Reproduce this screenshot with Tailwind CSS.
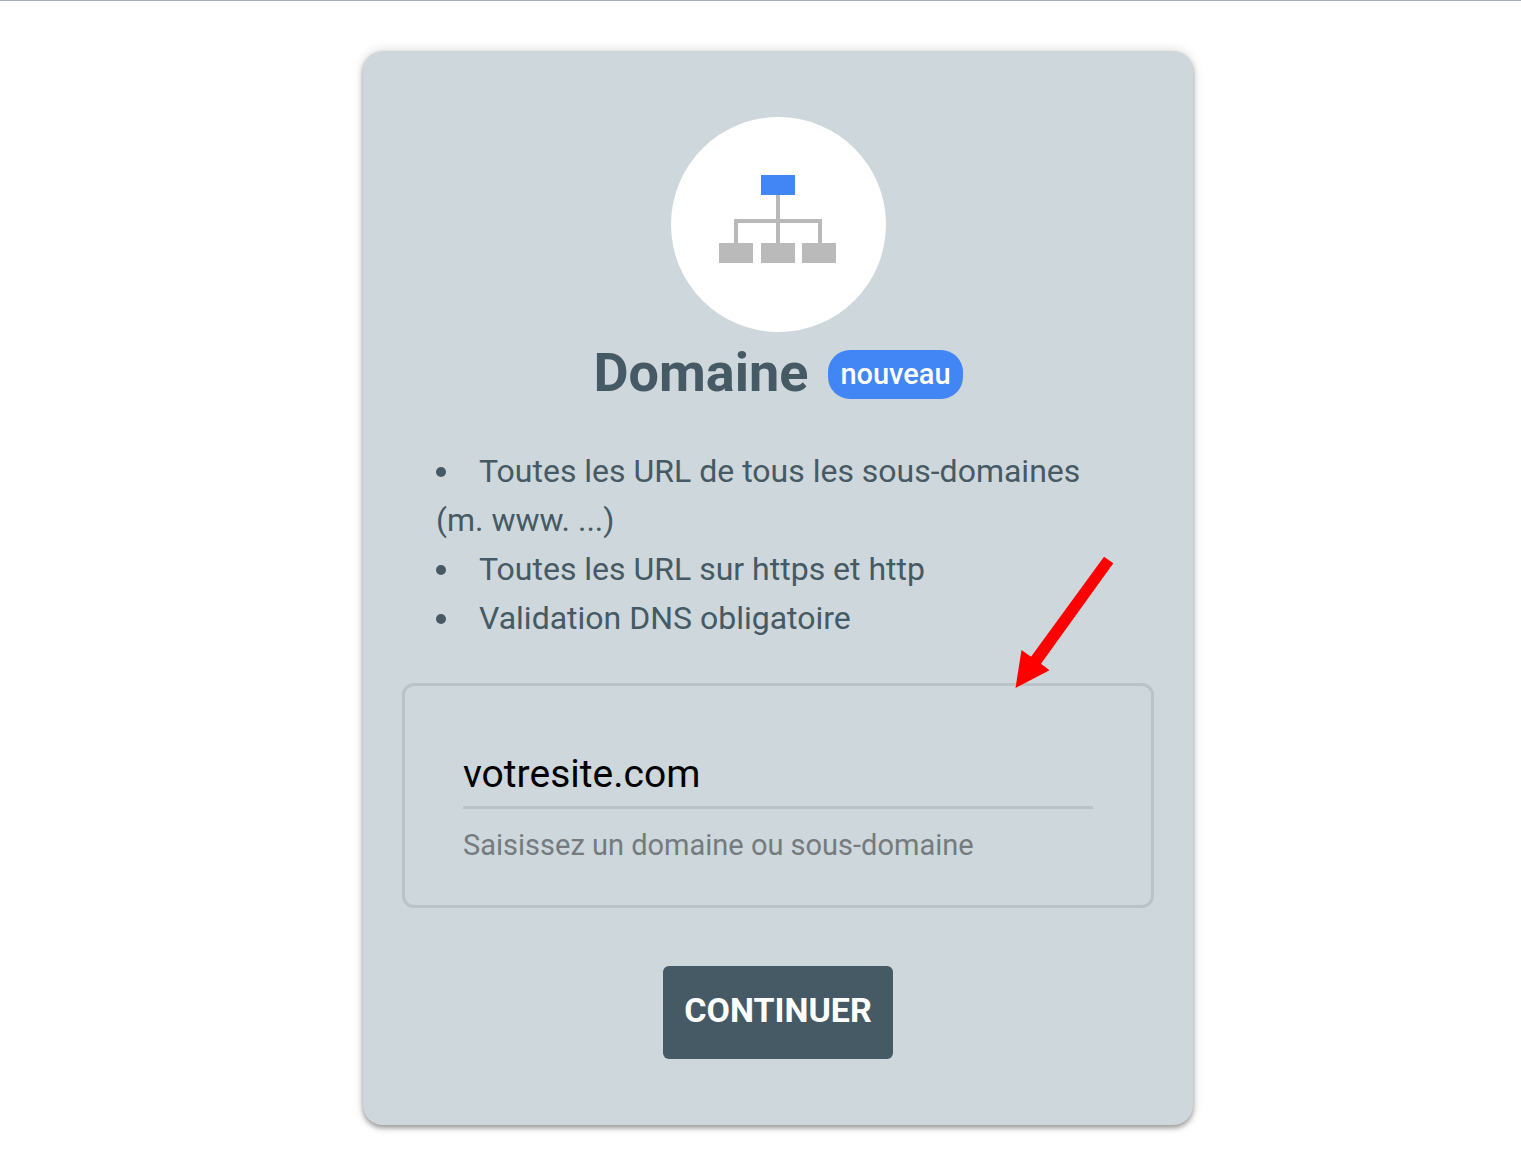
<!DOCTYPE html>
<html lang="fr">
    <head>
        <meta charset="UTF-8">
        <meta name="viewport" content="width=device-width, initial-scale=1.0">
        <title>Domaine</title>
        <script src="https://cdn.jsdelivr.net/npm/@tailwindcss/browser@4"></script>
    </head>
    <body class="min-h-screen bg-white border-t border-[#a3adbb] font-['Roboto',sans-serif] text-[#455a64]">
        <main class="flex justify-center pt-[50px] pb-[50px] pl-[35px]">
            <form class="relative flex flex-col items-center w-full max-w-[830px] px-[39px] pt-[66px] pb-[66px] bg-[#ced7db] rounded-[20px] shadow-[0_3px_5px_rgba(0,0,0,0.35),0_0_12px_rgba(0,0,0,0.15)]">
                <!-- Domain icon -->
                <div class="flex items-center justify-center size-[215px] pb-3 rounded-full bg-white">
                    <svg class="w-[118px] h-[88px]" viewBox="0 0 118 88" aria-hidden="true">
                        <path d="M59 20V68M17 68V46H101V68" fill="none" stroke="#b9b9b9" stroke-width="4"/>
                        <path d="M0 68h34v20H0zM42 68h34v20H42zM83 68h34v20H83z" fill="#bababa"/>
                        <path d="M42 0h34v20H42z" fill="#4285f4"/>
                    </svg>
                </div>
                <div class="flex items-center gap-5 mt-[18px]">
                    <h1 class="pb-1 text-[54px] leading-[45px] font-bold">Domaine</h1>
                    <span class="px-3 rounded-[22px] bg-[#4285f4] text-white text-[29px] leading-[49px] font-medium">nouveau</span>
                </div>
                <ul class="self-stretch mt-12 px-[34px] list-disc list-inside text-[32px] leading-[49px]">
                    <li>Toutes les URL de tous les sous-domaines (m. www. ...)</li>
                    <li>Toutes les URL sur https et http</li>
                    <li>Validation DNS obligatoire</li>
                </ul>
                <!-- Domain field -->
                <div class="self-stretch mt-10 px-[58px] pt-[60px] pb-[38px] border-3 border-[#bac3c6] rounded-[12px]">
                    <input id="domain" type="text" value="votresite.com" aria-describedby="domain-hint" class="block w-full h-[63px] pb-1 border-b-3 border-[#bac3c6] bg-transparent text-[39px] text-black outline-none">
                    <label id="domain-hint" for="domain" class="block mt-[14px] text-[29px] leading-[44px] text-[#757b7e]">Saisissez un domaine ou sous-domaine</label>
                </div>
                <button type="submit" class="mt-[58px] px-[21px] pb-1 h-[93px] rounded-[6px] bg-[#455a64] text-white text-[34px] font-bold">CONTINUER</button>
                <!-- Arrow -->
                <svg class="absolute top-[505px] right-[79px] w-[99px] h-[133px]" viewBox="0 0 99 133" aria-hidden="true">
                    <path d="M89 0.7L98.3 7.3L26 107.7L34.5 114.2L0.5 132L6.5 94L16 100.7Z" fill="#ff0000"/>
                </svg>
            </form>
        </main>
    </body>
</html>
